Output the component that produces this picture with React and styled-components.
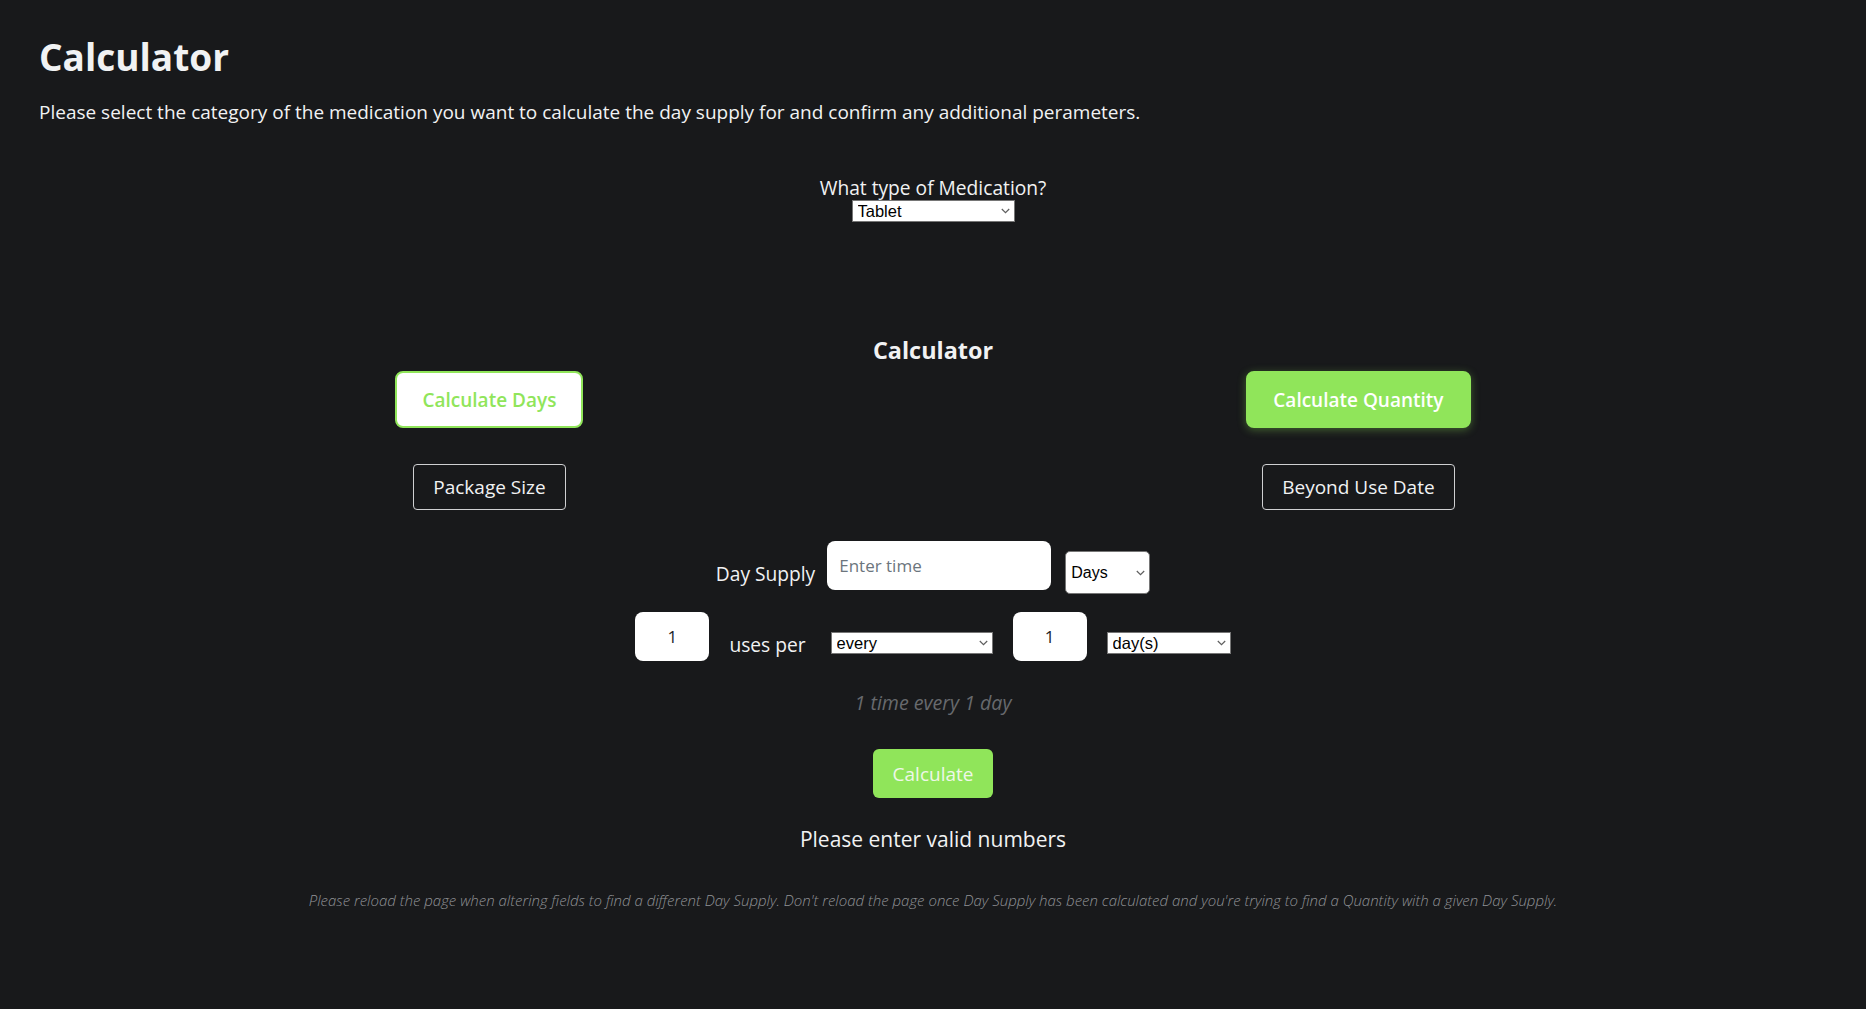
import { useState } from "react";
import styled, { createGlobalStyle } from "styled-components";

const GlobalStyle = createGlobalStyle`
  html, body {
    margin: 0;
    padding: 0;
    background: #18191b;
  }
  body {
    font-family: "Open Sans", "Liberation Sans", sans-serif;
    color: #f1f2f3;
  }
`;

const green = "#90e55a";

const Page = styled.div`
  min-height: 1009px;
  box-sizing: border-box;
  padding: 33px 39px 40px;
`;

const Title = styled.h1`
  margin: 0;
  font-size: 37px;
  font-weight: 700;
  line-height: 48px;
`;

const Intro = styled.p`
  margin: 18px 0 0;
  font-size: 19px;
  line-height: 26px;
`;

const Picker = styled.div`
  margin-top: 51px;
  display: flex;
  flex-direction: column;
  align-items: center;
`;

const PickerLabel = styled.label`
  font-size: 19.2px;
  line-height: 24px;
`;

const SelectWrap = styled.span`
  position: relative;
  display: inline-block;
  width: ${(p) => p.$w}px;
  height: ${(p) => p.$h || 21}px;
`;

const NativeSelect = styled.select`
  appearance: none;
  -webkit-appearance: none;
  width: 100%;
  height: 100%;
  font-family: "Liberation Sans", Arial, sans-serif;
  font-size: ${(p) => p.$fs || 16.5}px;
  color: #000;
  background: #fff;
  border: 1px solid #767676;
  border-radius: ${(p) => p.$r || 0}px;
  padding: 0 18px 0 5px;
  box-sizing: border-box;
  outline: none;
`;

const Chevron = styled.svg`
  position: absolute;
  right: 5px;
  top: 50%;
  margin-top: -3px;
  width: 9px;
  height: 6px;
  pointer-events: none;
`;

function Dropdown({ w, h, r, fs, options, id }) {
  return (
    <SelectWrap $w={w} $h={h}>
      <NativeSelect id={id} $r={r} $fs={fs}>
        {options.map((o) => (
          <option key={o}>{o}</option>
        ))}
      </NativeSelect>
      <Chevron viewBox="0 0 9 6">
        <polyline points="0.8,1 4.5,4.7 8.2,1" fill="none" stroke="#5f5f5f" strokeWidth="1.2" />
      </Chevron>
    </SelectWrap>
  );
}

const SectionTitle = styled.h2`
  margin: 113px 0 0;
  text-align: center;
  font-size: 23.4px;
  font-weight: 700;
  line-height: 30px;
`;

const ModeRow = styled.div`
  display: flex;
  justify-content: space-around;
  padding: 0 25px;
  margin-top: 6px;
`;

const ModeColumn = styled.div`
  display: flex;
  flex-direction: column;
  align-items: center;
  gap: 36px;
`;

const ModeButton = styled.button`
  height: 57px;
  padding: 0 25px;
  box-sizing: border-box;
  border-radius: 8px;
  border: 2px solid ${green};
  font-family: inherit;
  font-size: 19px;
  font-weight: 600;
  cursor: pointer;
  background: ${(p) => (p.$active ? green : "#fff")};
  color: ${(p) => (p.$active ? "#fff" : green)};
  box-shadow: ${(p) => (p.$active ? "0 2px 8px rgba(144, 229, 90, 0.35)" : "none")};
`;

const GhostButton = styled.button`
  height: 46px;
  padding: 0 19px;
  box-sizing: border-box;
  border-radius: 4px;
  border: 1px solid #cfd0d2;
  background: transparent;
  color: #f1f2f3;
  font-family: inherit;
  font-size: 19px;
  cursor: pointer;
`;

const FormRow = styled.div`
  display: flex;
  justify-content: center;
  align-items: ${(p) => p.$align || "center"};
  gap: ${(p) => p.$gap || 20}px;
  margin-top: ${(p) => p.$mt}px;
`;

const FieldLabel = styled.span`
  font-size: 19.2px;
  line-height: 24px;
`;

const TextInput = styled.input`
  width: ${(p) => p.$w}px;
  height: 49px;
  box-sizing: border-box;
  border: none;
  border-radius: 8px;
  background: #fff;
  padding: 0 12px;
  font-family: inherit;
  font-size: 17px;
  color: #212529;
  text-align: ${(p) => p.$align || "left"};
  outline: none;

  &::placeholder {
    color: #6c757d;
  }
`;

const Summary = styled.p`
  margin: 30px 0 0;
  text-align: center;
  font-style: italic;
  font-size: 19.6px;
  line-height: 24px;
  color: #67696d;
`;

const CalcButton = styled.button`
  display: block;
  margin: 34px auto 0;
  width: 120px;
  height: 49px;
  border: none;
  border-radius: 6px;
  background: ${green};
  color: #eef7e8;
  font-family: inherit;
  font-size: 19px;
  cursor: pointer;
`;

const Message = styled.p`
  margin: 28px 0 0;
  text-align: center;
  font-size: 21px;
  line-height: 26px;
`;

const Footnote = styled.p`
  margin: 38px 0 0;
  text-align: center;
  font-style: italic;
  font-weight: 300;
  font-size: 15px;
  line-height: 20px;
  color: #909296;
`;

export default function App() {
  const [mode, setMode] = useState("quantity");
  const [uses, setUses] = useState("1");
  const [interval, setIntervalValue] = useState("1");

  return (
    <>
      <GlobalStyle />
      <Page>
        <Title>Calculator</Title>
        <Intro>
          Please select the category of the medication you want to calculate the day supply for and confirm any
          additional perameters.
        </Intro>

        <Picker>
          <PickerLabel htmlFor="medtype">What type of Medication?</PickerLabel>
          <Dropdown id="medtype" w={163} h={22} options={["Tablet", "Liquid", "Inhaler", "Cream"]} />
        </Picker>

        <SectionTitle>Calculator</SectionTitle>
        <ModeRow>
          <ModeColumn>
            <ModeButton $active={mode === "days"} onClick={() => setMode("days")}>
              Calculate Days
            </ModeButton>
            <GhostButton>Package Size</GhostButton>
          </ModeColumn>
          <ModeColumn>
            <ModeButton $active={mode === "quantity"} onClick={() => setMode("quantity")}>
              Calculate Quantity
            </ModeButton>
            <GhostButton>Beyond Use Date</GhostButton>
          </ModeColumn>
        </ModeRow>

        <FormRow $mt={27} $gap={12}>
          <FieldLabel style={{ marginTop: 16 }}>Day Supply</FieldLabel>
          <TextInput $w={224} placeholder="Enter time" />
          <span style={{ marginLeft: 2, marginTop: 14 }}>
            <Dropdown w={85} h={43} r={5} fs={16} options={["Days", "Weeks"]} />
          </span>
        </FormRow>

        <FormRow $mt={18} $align="flex-end" $gap={20}>
          <TextInput $w={74} $align="center" value={uses} onChange={(e) => setUses(e.target.value)} />
          <FieldLabel style={{ marginBottom: 4 }}>uses per</FieldLabel>
          <span style={{ marginBottom: 7, marginLeft: 5, lineHeight: 0 }}>
            <Dropdown w={162} h={22} options={["every", "per"]} />
          </span>
          <TextInput $w={74} $align="center" value={interval} onChange={(e) => setIntervalValue(e.target.value)} />
          <span style={{ marginBottom: 7, lineHeight: 0 }}>
            <Dropdown w={124} h={22} options={["day(s)", "week(s)"]} />
          </span>
        </FormRow>

        <Summary>1 time every 1 day</Summary>
        <CalcButton>Calculate</CalcButton>
        <Message>Please enter valid numbers</Message>
        <Footnote>
          Please reload the page when altering fields to find a different Day Supply. Don't reload the page once Day
          Supply has been calculated and you're trying to find a Quantity with a given Day Supply.
        </Footnote>
      </Page>
    </>
  );
}
